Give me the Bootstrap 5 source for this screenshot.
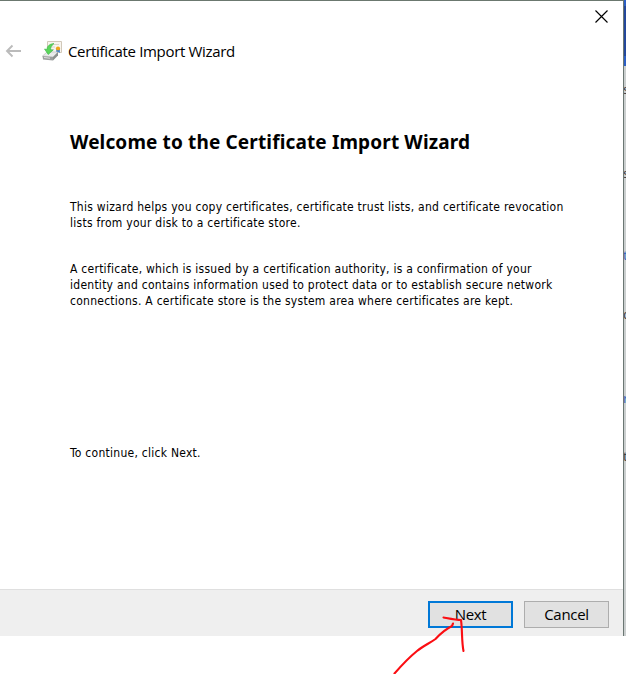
<!DOCTYPE html>
<html lang="en">
<head>
<meta charset="utf-8">
<meta name="viewport" content="width=device-width, initial-scale=1">
<title>Certificate Import Wizard</title>
<link href="https://cdn.jsdelivr.net/npm/bootstrap@5.3.0/dist/css/bootstrap.min.css" rel="stylesheet">
<style>
body{background:#fff;color:#000;overflow:hidden;font-family:"Open Sans","Noto Sans",sans-serif}
.desktop{width:626px;height:636px}
.wizard{width:624px;border-top:1px solid #6b786f;border-right:1px solid #6b7773}
.titlebar{height:30px;padding:9px 15px 0 0}
.close-btn{width:13px;height:13px}
.wizard-head{height:40px;padding-left:5px}
.back{width:17px;height:14px;margin-right:20px}
.cert-icon{width:20px;height:22px;margin-right:6px}
.head-title{font-size:15px;line-height:20px;letter-spacing:-.33px}
.wizard-body{padding:59px 0 0 70px;font-family:"DejaVu Sans Condensed","DejaVu Sans",sans-serif;font-stretch:condensed;font-size:12px;line-height:16px;letter-spacing:.26px}
.welcome{font-family:"Noto Sans","Open Sans",sans-serif;font-stretch:normal;font-size:19px;line-height:24px;font-weight:700;height:24px;margin-bottom:45px;letter-spacing:.14px}
.copy{margin-bottom:30px}
.copy-end{margin-top:136px}
.copy span,.copy-end span{display:block}
.wizard-foot{height:47px;background:#efefef;border-top:1px solid #dfdfdf;padding:11px 14px 0 0;gap:11px}
.dlg-btn{width:85px;height:27px;border:1px solid #adadad;border-radius:0;background:#e1e1e1;color:#000;font-size:15px;line-height:20px;padding:0 0 2px;letter-spacing:-.3px}
.dlg-btn.is-default{border:2px solid #0078d7}
.behind{width:2px;background:#cbcfcf;font-family:"Noto Sans",sans-serif;font-size:13px;line-height:16px;color:#444}
.behind-bar{height:66px;background:#24489a;border-top:6px solid #2c5fc4;border-bottom:10px solid #2c5fc4}
.peek{left:-1px}
.y1{top:81px}.y2{top:165px}.y3{top:247px}.y4{top:306px}.y5{top:390px}.y6{top:448px}
.peek-link{color:#3c67bd}
.pen{left:380px;top:605px}
</style>
<script src="https://cdn.jsdelivr.net/npm/bootstrap@5.3.0/dist/js/bootstrap.bundle.min.js"></script>
</head>
<body>
<div class="desktop d-flex">
  <main class="wizard d-flex flex-column bg-white flex-shrink-0">
    <div class="titlebar d-flex justify-content-end">
      <svg class="close-btn" viewBox="0 0 13 13" role="button" aria-label="Close"><path d="M.5.5l12 12M12.500.5l-12 12" stroke="#000" stroke-width="1.15" fill="none"/></svg>
    </div>
    <header class="wizard-head d-flex align-items-center">
      <svg class="back" viewBox="0 0 17 14"><path d="M16 7H2M7.500 1.500L2 7l5.500 5.500" stroke="#bbb" stroke-width="1.9" fill="none"/></svg>
      <svg class="cert-icon" viewBox="0 0 20 22">
        <path d="M5.500 1.500h14v11h-14z" fill="#f8f5ef" stroke="#d1c8b9"/>
        <path d="M8 4.500h9M8 7h5M8 9.500h4" stroke="#ddd6ca"/>
        <path d="M14.300 9h3.500v4l-1.700-1.300-1.800 1.300z" fill="#347bd0"/>
        <circle cx="16" cy="8.500" r="2.100" fill="#f0a51c"/>
        <path d="M.5 16L5 12h11l-5 5z" fill="#e9ebeb" stroke="#bfc2c1" stroke-width=".7"/>
        <path d="M.5 16l10.500 1v3.500L1 19.500z" fill="#9c9f9f"/>
        <path d="M11 17l5-5v3.500l-5 5z" fill="#8b908f"/>
        <path d="M2 17.500l6 .7" stroke="#dedfdf"/>
        <path d="M12 3.500C7 4 5 6.500 5 9.500L2.500 9l3.700 5.500 5-4.500-2.700-.2C8.500 7.500 9.500 5.500 12 3.500z" fill="#5bd65b" stroke="#3bb446" stroke-width=".6"/>
      </svg>
      <div class="head-title text-nowrap">Certificate Import Wizard</div>
    </header>
    <section class="wizard-body flex-grow-1 text-nowrap">
      <h1 class="welcome">Welcome to the Certificate Import Wizard</h1>
      <p class="copy"><span>This wizard helps you copy certificates, certificate trust lists, and certificate revocation</span><span>lists from your disk to a certificate store.</span></p>
      <p class="copy mb-0"><span>A certificate, which is issued by a certification authority, is a confirmation of your</span><span>identity and contains information used to protect data or to establish secure network</span><span>connections. A certificate store is the system area where certificates are kept.</span></p>
      <p class="copy-end mb-0"><span>To continue, click Next.</span></p>
    </section>
    <footer class="wizard-foot d-flex justify-content-end align-items-start">
      <button class="btn dlg-btn is-default" type="button">Next</button>
      <button class="btn dlg-btn" type="button">Cancel</button>
    </footer>
  </main>
  <aside class="behind position-relative overflow-hidden flex-shrink-0" aria-hidden="true">
    <div class="behind-bar"></div>
    <span class="peek y1 position-absolute">s</span>
    <span class="peek y2 position-absolute">s</span>
    <span class="peek y3 peek-link position-absolute">t</span>
    <span class="peek y4 position-absolute">c</span>
    <span class="peek y5 peek-link position-absolute">r</span>
    <span class="peek y6 position-absolute">t</span>
  </aside>
</div>
<svg class="pen position-absolute pe-none" width="100" height="69" viewBox="380 605 100 69"><path d="M394.500 673.500C401 666 409 657.500 417 651C423 646 430 643 435.500 639C441 633 447 628.500 452 626L453 623.500M443.500 617.500C449 618.500 456 620 461 620C462.500 631 461.500 641 463.500 651" fill="none" stroke="#fb0d12" stroke-width="2.100" stroke-linecap="round" stroke-linejoin="round"/></svg>
</body>
</html>
